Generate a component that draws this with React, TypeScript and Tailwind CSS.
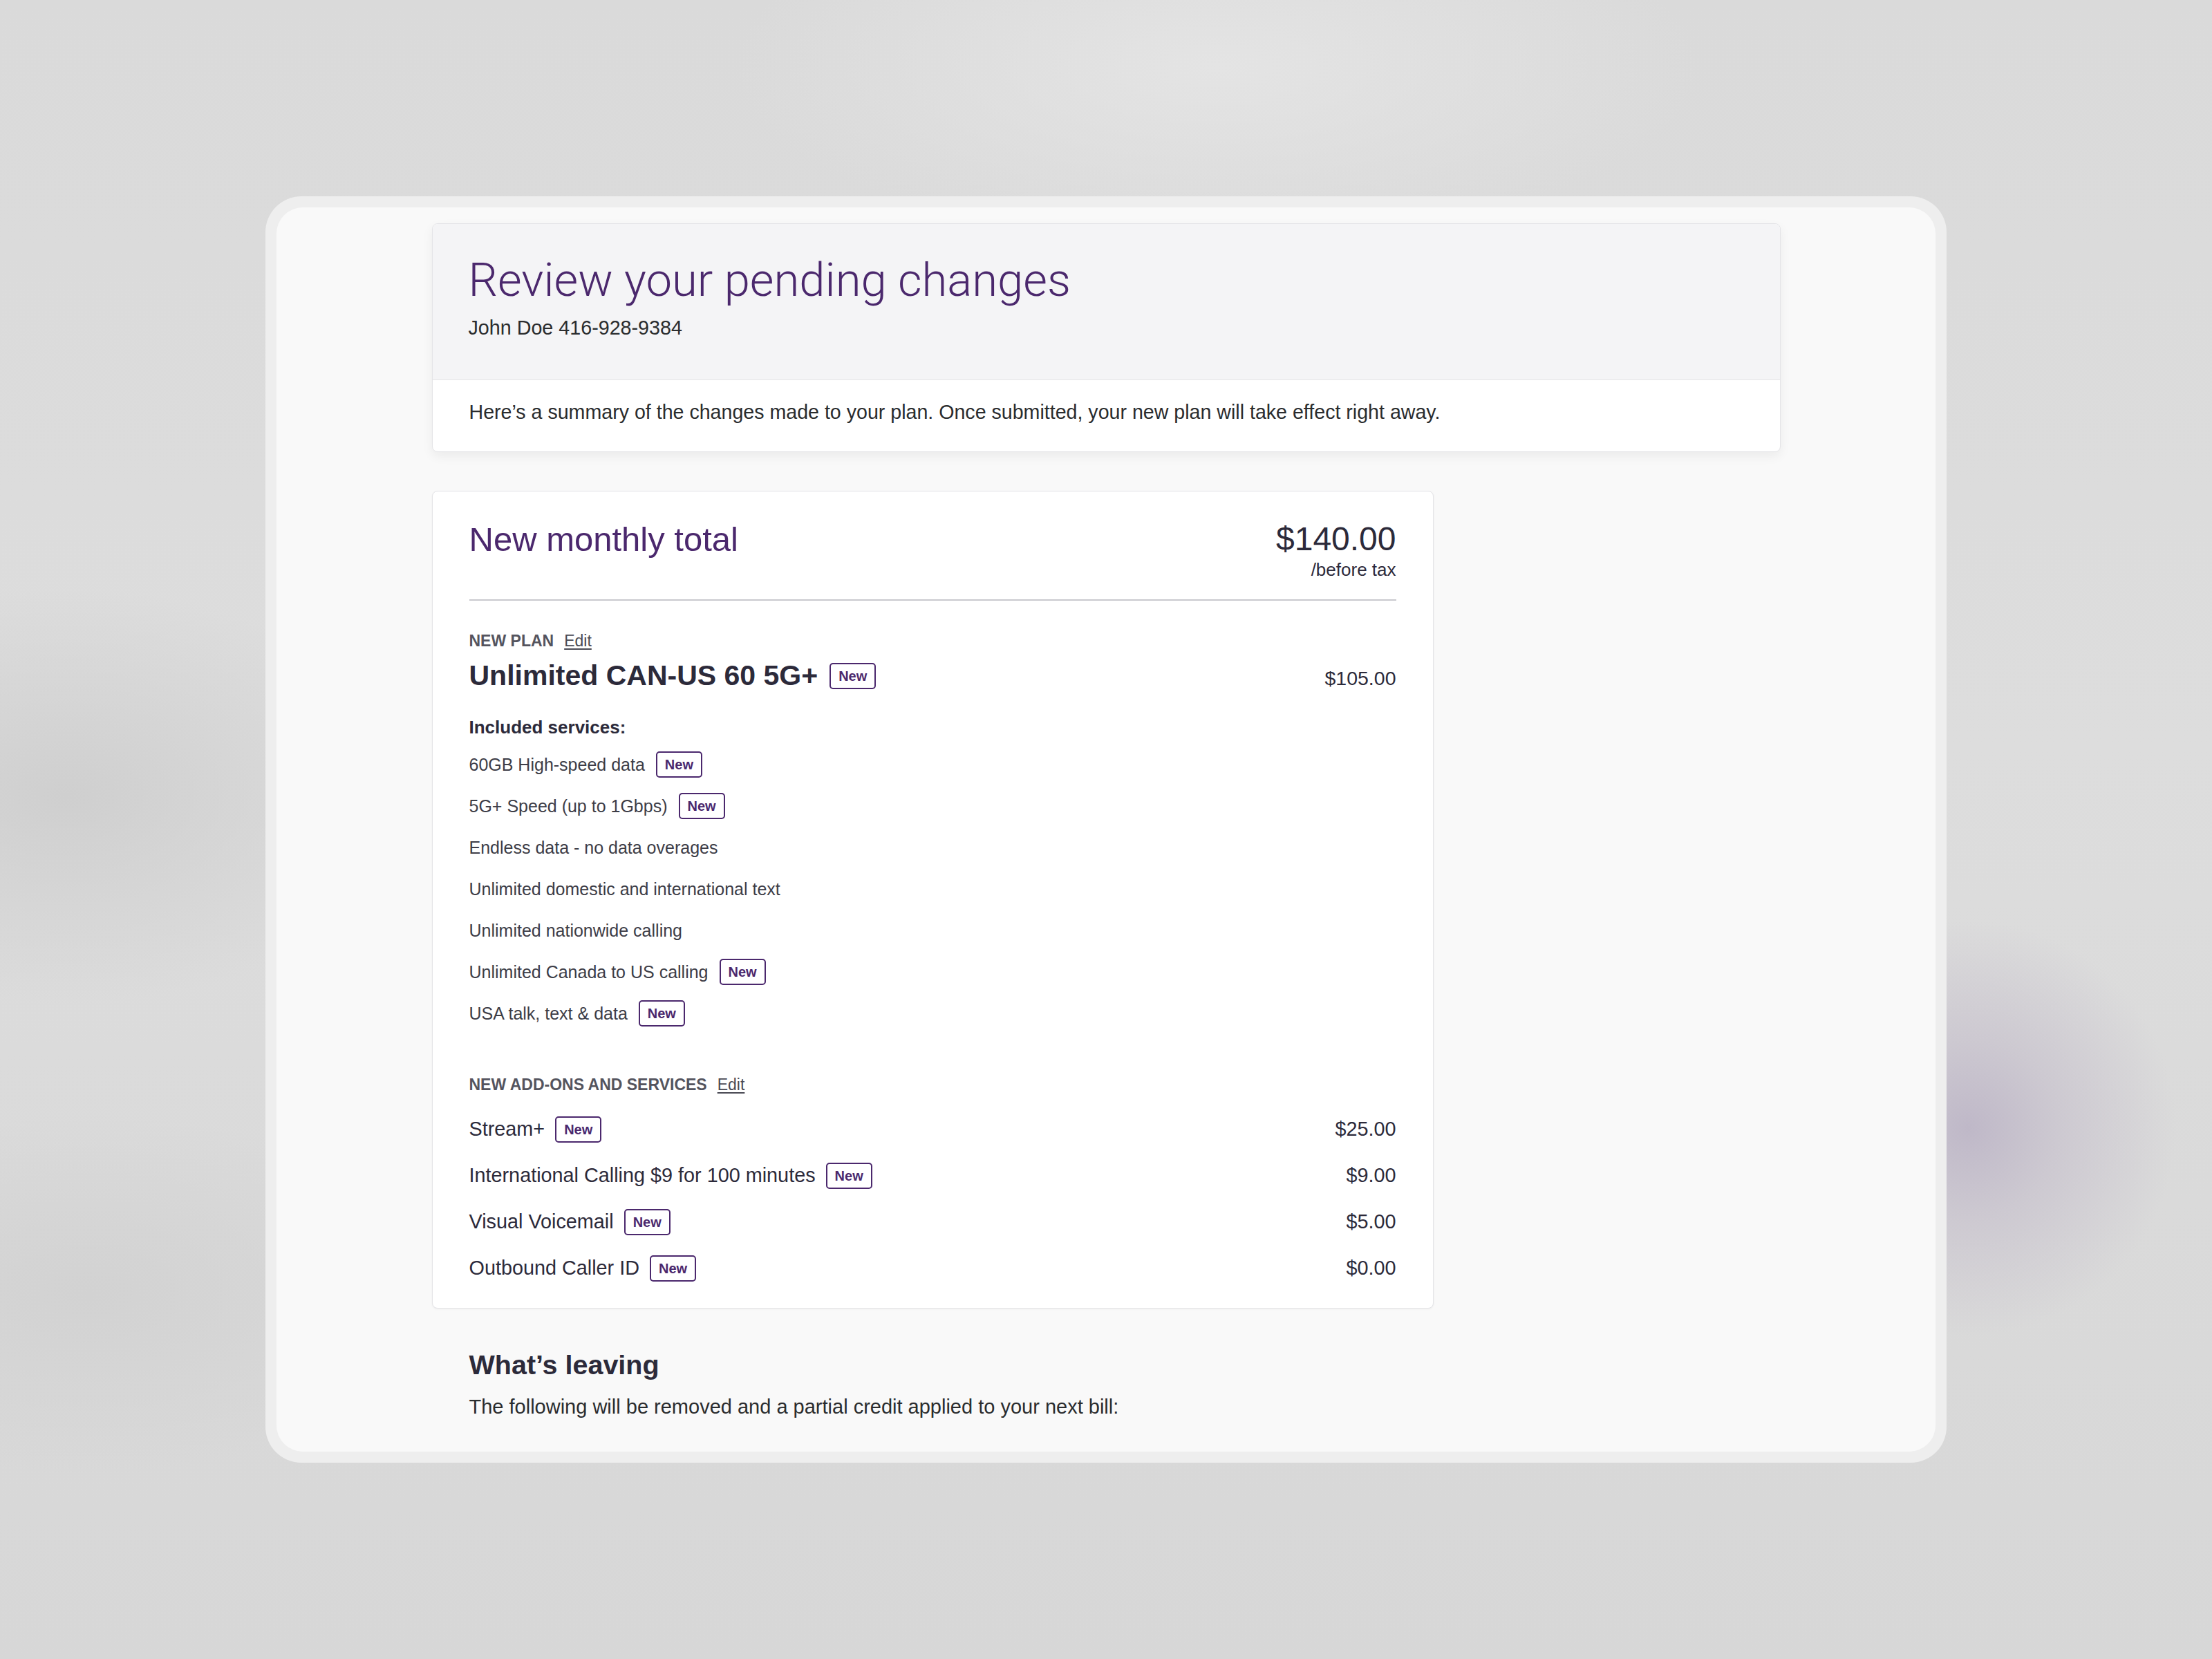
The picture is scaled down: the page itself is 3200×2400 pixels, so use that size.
import { ChevronLeft } from "lucide-react";

const planItems = [
  { label: "60GB High-speed data", isNew: true },
  { label: "5G+ Speed (up to 1Gbps)", isNew: true },
  { label: "Endless data - no data overages", isNew: false },
  { label: "Unlimited domestic and international text", isNew: false },
  { label: "Unlimited nationwide calling", isNew: false },
  { label: "Unlimited Canada to US calling", isNew: true },
  { label: "USA talk, text & data", isNew: true },
];

const addOns = [
  { label: "Stream+", price: "$25.00" },
  { label: "International Calling $9 for 100 minutes", price: "$9.00" },
  { label: "Visual Voicemail", price: "$5.00" },
  { label: "Outbound Caller ID", price: "$0.00" },
];

function NewBadge() {
  return (
    <span className="flex h-[38px] items-center rounded-[5px] border-2 border-[#4b286d] px-[11px] text-[20px] leading-none font-bold text-[#4b286d]">
      New
    </span>
  );
}

function SectionLabel({ children }: { children: React.ReactNode }) {
  return (
    <div className="flex items-baseline gap-[15px] text-[23px] leading-none">
      <span className="font-bold text-[#54545e]">{children}</span>
      <span className="text-[#4a4a54] underline underline-offset-[3px]">Edit</span>
    </div>
  );
}

export default function App() {
  return (
    <div className="min-h-screen w-full bg-[radial-gradient(ellipse_700px_260px_at_55%_4%,#e4e4e4_0%,transparent_100%),radial-gradient(circle_at_89%_68%,#bfb8c8_0%,#cdc9d1_130px,transparent_300px),radial-gradient(ellipse_500px_300px_at_3%_48%,#cfcfcf_0%,transparent_100%),radial-gradient(ellipse_500px_260px_at_4%_78%,#d2d2d2_0%,transparent_100%),linear-gradient(180deg,#dadada_0%,#dddddd_45%,#d7d7d7_100%)] pt-[284px] font-['Liberation_Sans',Arial,sans-serif]">
      {/* device frame */}
      <div className="mx-auto h-[1832px] w-[2432px] rounded-[52px] bg-[#eeeeee] p-[16px]">
        <div className="h-full overflow-hidden rounded-[38px] bg-[#f9f9f9]">
          <div className="mx-auto w-[1951px]">
            {/* back link, mostly hidden under the top edge */}
            <div className="-mt-[24px] flex h-[29px] items-center gap-[4px] pl-[14px] text-[28px] leading-[29px] text-[#a2a2aa]">
              <ChevronLeft className="h-[24px] w-[24px]" strokeWidth={2} />
              <span>Back to select add-ons</span>
            </div>

            {/* Header card */}
            <div className="mt-[18px] overflow-hidden rounded-[8px] border border-[#e4e4e7] bg-white shadow-[0_6px_16px_rgba(0,0,0,0.06)]">
              <div className="h-[226px] border-b border-[#e4e4e7] bg-[#f4f4f6] px-[52px] pt-[48px]">
                <h1 className="font-['Roboto',sans-serif] text-[67px] leading-none font-light text-[#4b286d]">
                  Review your pending changes
                </h1>
                <p className="mt-[21px] text-[28.7px] leading-none text-[#2a2c2e]">John Doe 416-928-9384</p>
              </div>
              <div className="h-[103px] px-[53px] pt-[32px]">
                <p className="text-[28.6px] leading-none text-[#2a2c2e]">
                  Here’s a summary of the changes made to your plan. Once submitted, your new plan will take effect right away.
                </p>
              </div>
            </div>

            {/* Monthly total card */}
            <div className="mt-[56px] w-[1449px] rounded-[8px] border border-[#e4e4e7] bg-white px-[53px] pt-[45px] pb-[24px] shadow-[0_1px_3px_rgba(0,0,0,0.05)]">
              <div className="flex items-start justify-between">
                <h2 className="text-[49px] leading-none text-[#4b286d]">New monthly total</h2>
                <div className="flex flex-col items-end">
                  <span className="text-[48px] leading-none text-[#2c2a3a]">$140.00</span>
                  <span className="mt-[7px] text-[26px] leading-none text-[#2c2a3a]">/before tax</span>
                </div>
              </div>
              <div className="mt-[30px] h-[2px] bg-[#c9c9ce]" />

              <div className="mt-[47px]">
                <SectionLabel>NEW PLAN</SectionLabel>
              </div>
              <div className="mt-[18px] flex items-baseline justify-between">
                <div className="flex items-center gap-[17px]">
                  <span className="text-[41px] leading-none font-bold text-[#2c2a3a]">Unlimited CAN-US 60 5G+</span>
                  <NewBadge />
                </div>
                <span className="text-[28.5px] leading-none text-[#2c2a3a]">$105.00</span>
              </div>

              <p className="mt-[41px] text-[26px] leading-none font-bold text-[#2c2a3a]">Included services:</p>
              <ul className="mt-[11px] flex flex-col">
                {planItems.map((item) => (
                  <li key={item.label} className="flex h-[60px] items-center gap-[16px] text-[25px] leading-none text-[#3d3d47]">
                    <span>{item.label}</span>
                    {item.isNew && <NewBadge />}
                  </li>
                ))}
              </ul>

              <div className="mt-[62px]">
                <SectionLabel>NEW ADD-ONS AND SERVICES</SectionLabel>
              </div>
              <ul className="mt-[19px] flex flex-col">
                {addOns.map((a) => (
                  <li key={a.label} className="flex h-[67px] items-center justify-between text-[28.8px] leading-none text-[#2c2a3a]">
                    <span className="flex items-center gap-[15px]">
                      <span>{a.label}</span>
                      <NewBadge />
                    </span>
                    <span>{a.price}</span>
                  </li>
                ))}
              </ul>
            </div>

            {/* What's leaving */}
            <div className="px-[54px]">
              <h3 className="mt-[62px] text-[39.5px] leading-none font-bold text-[#2c2a3a]">What’s leaving</h3>
              <p className="mt-[26px] text-[29px] leading-none text-[#2a2c2e]">
                The following will be removed and a partial credit applied to your next bill:
              </p>
            </div>
          </div>
        </div>
      </div>
    </div>
  );
}
